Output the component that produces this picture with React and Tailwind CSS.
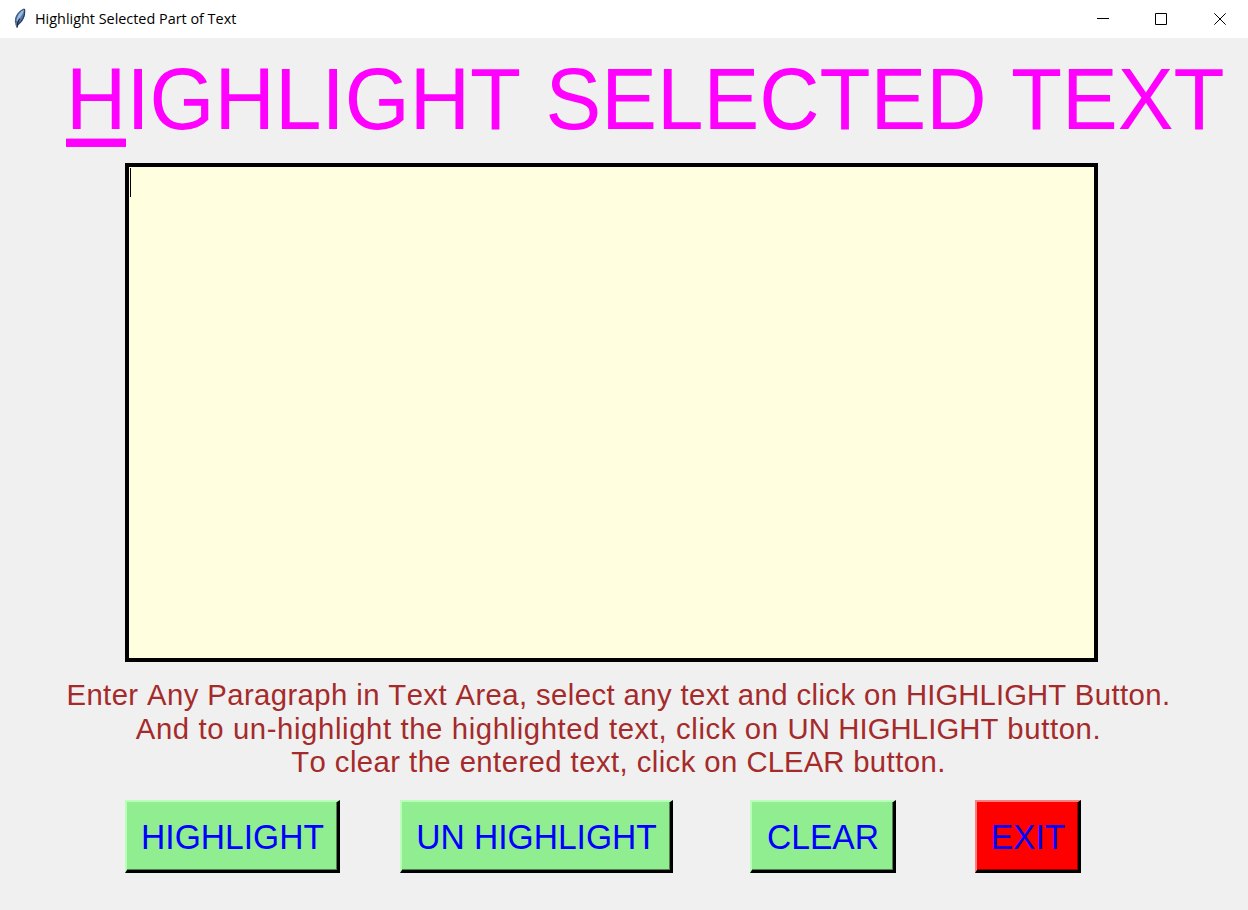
const buttonBase =
  "h-[73px] shrink-0 border-t-2 border-l-2 border-r-[3px] border-b-[3px] border-r-black border-b-black pt-[2px] pl-px text-[33.6px] leading-none text-[#0000ff] flex items-center justify-center whitespace-nowrap";
const green = "bg-[#90ee90] border-t-[#b9ffb9] border-l-[#b9ffb9] shadow-[inset_-1px_-1px_0_#4f7f4f]";
const red = "bg-[#ff0000] border-t-[#ff7f7f] border-l-[#ff7f7f] shadow-[inset_-1px_-1px_0_#990000]";

function Feather() {
  return (
    <svg width="16" height="22" viewBox="0 0 16 22">
      <path d="M12.500 0.500C8 1.500 3 7 3 12.500L3.400 17L5 19.500L6.500 17C10 14.500 13 10 13 5Z" fill="#4f76a8" />
      <path d="M11.500 1.800C8 4 5 8 4.500 13L6.800 12.500C8 9 10.500 7 11.800 3Z" fill="#9dbbe0" />
      <path d="M12.600 1C13.400 7 11 12.500 6 16.500" fill="none" stroke="#1e2a3e" strokeWidth="1" />
      <path d="M12 1C6 4 2.800 9 3.400 15" fill="none" stroke="#3b4a60" strokeWidth="0.700" />
      <path d="M7.500 10.500C6 13.500 5.200 16 5 19.800" fill="none" stroke="#202020" strokeWidth="1.100" />
    </svg>
  );
}

function ActionButton({ label, tone, className }) {
  return (
    <button className={`${buttonBase} ${tone} ${className}`}>
      <span className="block scale-y-[1.045]">{label}</span>
    </button>
  );
}

export default function App() {
  return (
    <div className="flex h-[910px] w-[1248px] flex-col overflow-hidden bg-[#f0f0f0] font-['Liberation_Sans',Arial,sans-serif] [font-kerning:none]">
      <header className="flex h-[38px] shrink-0 items-center bg-white pl-3">
        <Feather />
        <span className="ml-[7px] whitespace-nowrap font-['Open_Sans','Noto_Sans',sans-serif] text-[14.4px] text-black">
          Highlight Selected Part of Text
        </span>
        <svg className="ml-auto" width="152" height="38" viewBox="0 0 152 38" fill="none" stroke="black">
          <path d="M1 18.500H13" />
          <path d="M59.500 13.500H70.500V24.500H59.500Z" />
          <path d="M118.300 13.300L129.700 24.700M129.700 13.300L118.300 24.700" />
        </svg>
      </header>

      <h1 className="flex h-[125px] shrink-0 pt-[19px] pl-[66px] text-[83.6px] leading-[84px] whitespace-nowrap text-[#ff00ff]">
        <span className="block h-[89px] scale-y-[1.045]">
          <span className="inline-block h-[87.5px] border-b-8 border-[#ff00ff]">H</span>IGHLIGHT<span className="ml-px"> SELECTED</span><span className="ml-px"> TEXT</span>
        </span>
      </h1>

      <div className="ml-[125px] h-[499px] w-[973px] shrink-0 border-4 border-black bg-[#ffffe0] pt-px pl-px">
        <div className="h-[29px] w-px bg-black" />
      </div>

      <p className="mt-[16px] w-[1237px] shrink-0 text-center text-[29.300px] leading-[33.700px] whitespace-nowrap text-[#a52a2a]">
        <span className="block scale-y-[1.03] tracking-[0.400px]">
          Enter Any Paragraph in Text Area, select any text and click on <span className="tracking-[0.1px]">HIGHLIGHT</span> Button.
        </span>
        <span className="block scale-y-[1.03] tracking-[0.610px]">
          And to un-highlight the highlighted text, click on <span className="tracking-[0.1px]">UN HIGHLIGHT</span> button.
        </span>
        <span className="block scale-y-[1.03] tracking-[0.430px]">
          To clear the entered text, click on <span className="tracking-[0.1px]">CLEAR</span> button.
        </span>
      </p>

      <div className="mt-[21px] flex pl-[125px]">
        <ActionButton label="HIGHLIGHT" tone={green} className="w-[215px]" />
        <ActionButton label="UN HIGHLIGHT" tone={green} className="ml-[60px] w-[273px]" />
        <ActionButton label="CLEAR" tone={green} className="ml-[77px] w-[146px]" />
        <ActionButton label="EXIT" tone={red} className="ml-[79px] w-[106px]" />
      </div>
    </div>
  );
}
